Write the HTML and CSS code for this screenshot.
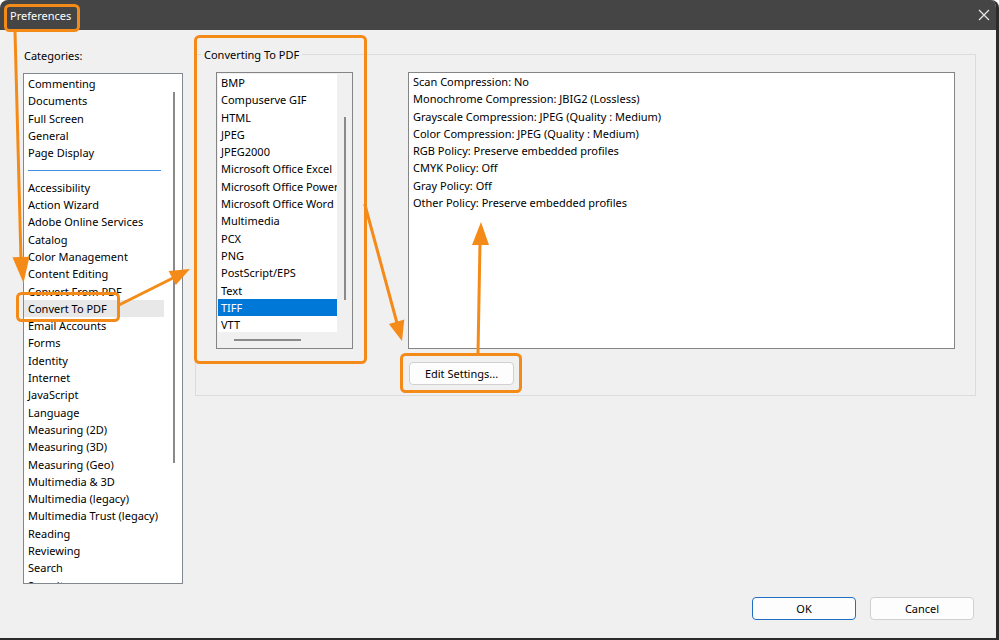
FILE: index.html
```html
<!DOCTYPE html>
<html lang="en">
<head>
<meta charset="utf-8">
<title>Preferences</title>
<link rel="stylesheet" href="styles.css">
</head>
<body>
<div class="window">
  <div class="titlebar">
    <span class="title">Preferences</span>
    <svg class="close" width="12" height="12" viewBox="0 0 12 12"><path d="M1 1L11 11M11 1L1 11" stroke="#e6e6e6" stroke-width="1.3" fill="none"/></svg>
  </div>
  <div class="main">
    <div class="content">
      <div class="categories">
        <div class="label">Categories:</div>
        <div class="catlist">
          <div class="cat-items">
            <div class="item">Commenting</div>
            <div class="item">Documents</div>
            <div class="item">Full Screen</div>
            <div class="item">General</div>
            <div class="item">Page Display</div>
            <div class="sep"></div>
            <div class="item">Accessibility</div>
            <div class="item">Action Wizard</div>
            <div class="item">Adobe Online Services</div>
            <div class="item">Catalog</div>
            <div class="item">Color Management</div>
            <div class="item">Content Editing</div>
            <div class="item">Convert From PDF</div>
            <div class="item sel">Convert To PDF</div>
            <div class="item">Email Accounts</div>
            <div class="item">Forms</div>
            <div class="item">Identity</div>
            <div class="item">Internet</div>
            <div class="item">JavaScript</div>
            <div class="item">Language</div>
            <div class="item">Measuring (2D)</div>
            <div class="item">Measuring (3D)</div>
            <div class="item">Measuring (Geo)</div>
            <div class="item">Multimedia &amp; 3D</div>
            <div class="item">Multimedia (legacy)</div>
            <div class="item">Multimedia Trust (legacy)</div>
            <div class="item">Reading</div>
            <div class="item">Reviewing</div>
            <div class="item">Search</div>
            <div class="item">Security</div>
          </div>
          <div class="cat-scroll"><div class="vthumb cat-thumb"></div></div>
        </div>
      </div>
      <div class="groupbox">
        <span class="legend">Converting To PDF</span>
        <div class="formatlist">
          <div class="fl-items">
            <div class="fitem">BMP</div>
            <div class="fitem">Compuserve GIF</div>
            <div class="fitem">HTML</div>
            <div class="fitem">JPEG</div>
            <div class="fitem">JPEG2000</div>
            <div class="fitem">Microsoft Office Excel</div>
            <div class="fitem">Microsoft Office PowerPoint</div>
            <div class="fitem">Microsoft Office Word</div>
            <div class="fitem">Multimedia</div>
            <div class="fitem">PCX</div>
            <div class="fitem">PNG</div>
            <div class="fitem">PostScript/EPS</div>
            <div class="fitem">Text</div>
            <div class="fitem fsel">TIFF</div>
            <div class="fitem">VTT</div>
          </div>
          <div class="fl-vscroll"><div class="vthumb fl-vthumb"></div></div>
          <div class="fl-hscroll"><div class="hthumb"></div></div>
          <div class="fl-corner"></div>
        </div>
        <div class="infocol">
          <div class="info">
            <div class="line">Scan Compression: No</div>
            <div class="line">Monochrome Compression: JBIG2 (Lossless)</div>
            <div class="line">Grayscale Compression: JPEG (Quality : Medium)</div>
            <div class="line">Color Compression: JPEG (Quality : Medium)</div>
            <div class="line">RGB Policy: Preserve embedded profiles</div>
            <div class="line">CMYK Policy: Off</div>
            <div class="line">Gray Policy: Off</div>
            <div class="line">Other Policy: Preserve embedded profiles</div>
          </div>
          <button class="btn edit">Edit Settings...</button>
        </div>
      </div>
    </div>
    <div class="footer">
      <button class="btn dlg ok">OK</button>
      <button class="btn dlg">Cancel</button>
    </div>
  </div>
  <svg class="annot" width="999" height="640" viewBox="0 0 999 640">
    <g fill="none" stroke="#f48a18" stroke-width="3" stroke-linejoin="round" stroke-linecap="round">
      <rect x="5.5" y="5.5" width="73" height="25" rx="4"/>
      <rect x="17.5" y="293.5" width="101" height="27" rx="4"/>
      <rect x="195.5" y="36.5" width="170" height="326" rx="4"/>
      <rect x="401.5" y="354.5" width="119" height="37" rx="4"/>
      <line x1="15" y1="31" x2="21" y2="260"/>
      <line x1="119" y1="305" x2="175" y2="277"/>
      <line x1="365" y1="205" x2="397" y2="323"/>
      <line x1="478" y1="354" x2="480" y2="243"/>
    </g>
    <g fill="#f48a18">
      <polygon points="23.5,283 12.5,257.2 29.5,256.8"/>
      <polygon points="190,269 175.8,285.1 168.6,270.9"/>
      <polygon points="402,341 404.3,319.5 388.9,323.9"/>
      <polygon points="481,222 472,245 489,245"/>
    </g>
  </svg>
</div>
</body>
</html>
```

FILE: styles.css
```css
* { box-sizing: border-box; }

html, body {
  margin: 0;
  padding: 0;
  background: #ffffff;
}

body {
  font-family: "Noto Sans", "Open Sans", sans-serif;
  font-size: 11px;
  color: #000;
}

.window {
  position: relative;
  width: 999px;
  height: 640px;
  background: #f0f0f0;
  border-right: 3px solid #2b2b2b;
  border-bottom: 2px solid #2b2b2b;
  border-radius: 8px 8px 0 0;
  overflow: hidden;
  display: flex;
  flex-direction: column;
}

.titlebar {
  height: 30px;
  flex: none;
  background: #454545;
  display: flex;
  align-items: center;
  padding-left: 10px;
  color: #fff;
}

.title {
  font-size: 11px;
}

.close {
  margin-left: auto;
  margin-right: 6px;
}

.main {
  flex: 1;
  padding: 17px 22px 0 23px;
  display: flex;
  flex-direction: column;
}

.content {
  display: flex;
  gap: 12px;
  align-items: flex-start;
}

.categories {
  width: 160px;
  flex: none;
}

.label {
  height: 17px;
  line-height: 17px;
  margin-bottom: 9px;
  padding-left: 1px;
}

.catlist {
  height: 511px;
  border: 1px solid #828790;
  background: #fff;
  display: flex;
  overflow: hidden;
}

.cat-items {
  width: 140px;
  flex: none;
  padding-top: 1px;
}

.item {
  height: 17.3px;
  line-height: 17.3px;
  padding-left: 4px;
  white-space: nowrap;
}

.item.sel {
  background: #e8e8e8;
}

.sep {
  height: 17.3px;
  display: flex;
  align-items: center;
  padding: 0 3px 0 4px;
}

.sep::after {
  content: "";
  flex: 1;
  height: 1px;
  background: #3d8ee0;
}

.cat-scroll {
  flex: 1;
}

.vthumb {
  width: 2px;
  background: #8a8a8a;
}

.cat-thumb {
  margin: 18px 0 0 9px;
  height: 371px;
}

.groupbox {
  position: relative;
  width: 781px;
  margin-top: 7px;
  border: 1px solid #dcdcdc;
  padding: 17px 20px 10px 20px;
  display: flex;
  gap: 55px;
  align-items: flex-start;
}

.legend {
  position: absolute;
  top: -9px;
  left: 5px;
  padding: 0 3px;
  line-height: 17px;
  background: #f0f0f0;
}

.formatlist {
  width: 137px;
  height: 277px;
  flex: none;
  border: 1px solid #858585;
  padding: 1px;
  background: #f0f0f0;
  display: grid;
  grid-template-columns: 119px 15px;
  grid-template-rows: 258px 15px;
}

.fl-items {
  background: #fff;
  overflow: hidden;
}

.fitem {
  height: 17.3px;
  line-height: 17.3px;
  padding-left: 3px;
  white-space: nowrap;
}

.fitem.fsel {
  background: #0078d7;
  color: #fff;
}

.fl-vscroll {
  background: #f0f0f0;
}

.fl-vthumb {
  margin: 43px 0 0 7px;
  height: 183px;
}

.fl-hscroll {
  background: #f0f0f0;
}

.hthumb {
  margin: 7px 0 0 16px;
  width: 67px;
  height: 2px;
  background: #8a8a8a;
}

.infocol {
  display: flex;
  flex-direction: column;
  gap: 13px;
  align-items: flex-start;
}

.info {
  width: 547px;
  height: 277px;
  border: 1px solid #858585;
  background: #fff;
  padding: 0 4px;
}

.line {
  height: 17.3px;
  line-height: 17.3px;
  white-space: nowrap;
}

.btn {
  font: inherit;
  color: #000;
  height: 23px;
  border: 1px solid #d0d0d0;
  border-radius: 4px;
  background: #fdfdfd;
  padding: 0;
}

.edit {
  width: 105px;
  margin-left: 1px;
}

.footer {
  margin-top: 13px;
  display: flex;
  justify-content: flex-end;
  gap: 14px;
}

.dlg {
  width: 104px;
}

.ok {
  border-color: #1f6fc5;
}

.annot {
  position: absolute;
  top: 0;
  left: 0;
  pointer-events: none;
}
```
